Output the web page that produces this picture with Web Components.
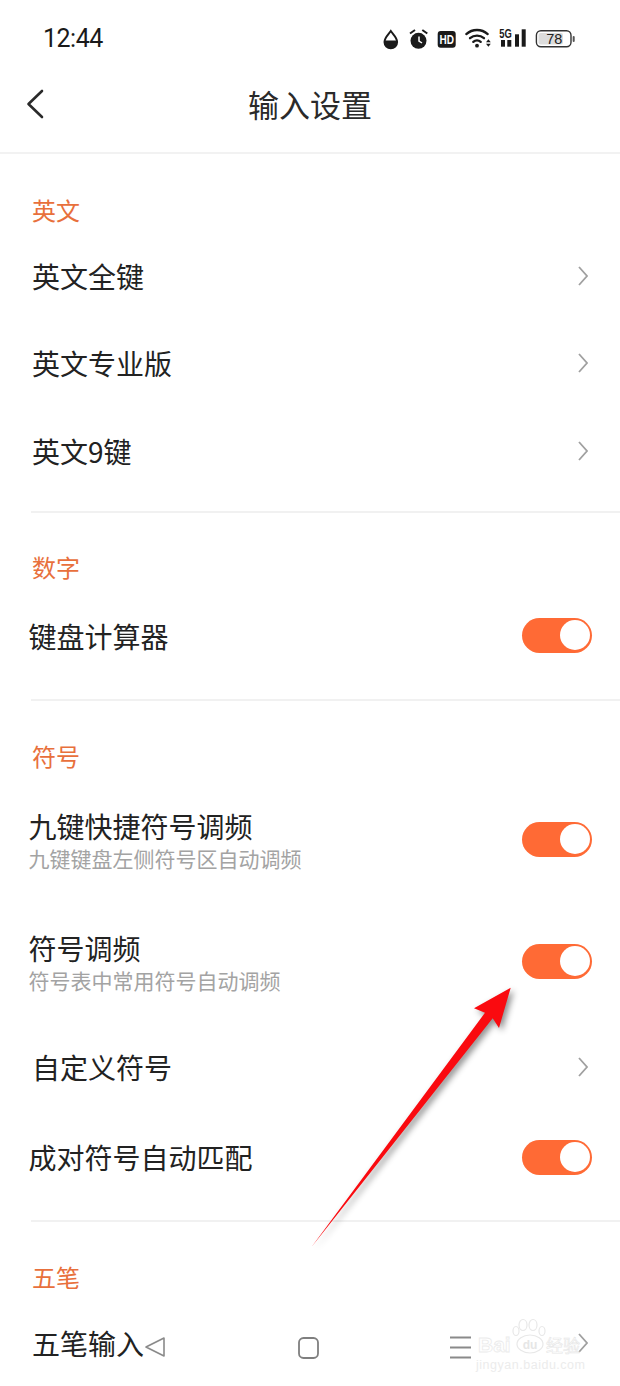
<!DOCTYPE html>
<html lang="zh">
<head>
<meta charset="utf-8">
<title>输入设置</title>
<style>
    html, body { margin: 0; background: #fff; }
    body {
        position: relative;
        width: 620px;
        height: 1386px;
        overflow: hidden;
        font-family: "Noto Sans CJK SC", "Liberation Sans", sans-serif;
        color: #222;
    }
</style>
</head>
<body>
<status-bar></status-bar>
<nav-header>输入设置</nav-header>

<settings-section label="英文" style="--top: 35px; --bottom: 16.5px">
    <setting-row chevron>英文全键</setting-row>
    <setting-row chevron>英文专业版</setting-row>
    <setting-row chevron>英文9键</setting-row>
</settings-section>

<settings-section label="数字" style="--top: 33.5px; --bottom: 20px; --gap: 3.5px">
    <setting-row toggle style="--shift: 2px">键盘计算器</setting-row>
</settings-section>

<settings-section label="符号" style="--top: 34.5px; --bottom: 17px; --gap: 1px">
    <setting-row toggle sub="九键键盘左侧符号区自动调频" style="--h: 122px">九键快捷符号调频</setting-row>
    <setting-row toggle sub="符号表中常用符号自动调频" style="--h: 122px">符号调频</setting-row>
    <setting-row chevron style="--h: 89px">自定义符号</setting-row>
    <setting-row toggle style="--h: 92px">成对符号自动匹配</setting-row>
</settings-section>

<settings-section label="五笔" style="--top: 34.5px; --bottom: 0px; --gap: 1px" class="last">
    <setting-row chevron>五笔输入</setting-row>
</settings-section>

<bottom-nav></bottom-nav>
<baidu-mark></baidu-mark>
<red-arrow></red-arrow>

<script>
class StatusBar extends HTMLElement {
    constructor() {
        super();
        this.attachShadow({ mode: 'open' });
        this.shadowRoot.innerHTML = `
            <style>
                :host {
                    display: flex;
                    align-items: center;
                    justify-content: space-between;
                    height: 58px;
                    padding: 18px 30px 0 43px;
                    box-sizing: border-box;
                    color: #1a1a1a;
                }
                .time { font: 400 25px Roboto, sans-serif; letter-spacing: -0.5px; }
                svg { display: block; flex: none; }
                text { font-family: "Liberation Sans", sans-serif; }
            </style>
            <span class="time">12:44</span>
            <svg width="220" height="45" viewBox="0 0 220 45">
                <!-- drop -->
                <path d="M20.800 15 C18 19 14.500 21.500 14.500 26 a6.300 6.300 0 0 0 12.600 0 C27.100 21.500 23.600 19 20.800 15Z" fill="none" stroke="#1a1a1a" stroke-width="2"/>
                <path d="M14.500 24.500 H27.100 V26 a6.300 6.300 0 0 1 -12.600 0Z" fill="#1a1a1a"/>
                <!-- alarm -->
                <circle cx="48.500" cy="24.800" r="8" fill="#1a1a1a"/>
                <path d="M49 20.500v4.500l3 2" fill="none" stroke="#fff" stroke-width="1.500"/>
                <path d="M40 17.500l5-3.500M57.300 17.500l-5-3.500" stroke="#1a1a1a" stroke-width="2" fill="none"/>
                <!-- HD -->
                <rect x="67.700" y="15" width="18" height="16.700" rx="3" fill="#1a1a1a"/>
                <text x="76.700" y="28" text-anchor="middle" font-size="12.500" font-weight="700" fill="#fff" textLength="14.500" lengthAdjust="spacingAndGlyphs">HD</text>
                <!-- wifi, arcs around the dot -->
                <path d="M96.300 18.100 A16 16 0 0 1 117.700 18.100 M100 22.200 A10.500 10.500 0 0 1 114 22.200 M103.300 25.900 A5.500 5.500 0 0 1 110.700 25.900" fill="none" stroke="#1a1a1a" stroke-width="2.300" stroke-linecap="round"/>
                <circle cx="107" cy="29.700" r="1.900" fill="#1a1a1a"/>
                <path d="M116 26.300h4.800l-2.400-3zM116 27.800h4.800l-2.400 3z" fill="#1a1a1a"/>
                <!-- 5G + bars -->
                <text x="129.300" y="22" font-size="12" font-weight="700" fill="#1a1a1a" textLength="12.500" lengthAdjust="spacingAndGlyphs">5G</text>
                <rect x="131" y="24" width="4" height="6.700" fill="#1a1a1a"/>
                <rect x="137.300" y="24" width="4" height="6.700" fill="#1a1a1a"/>
                <rect x="145" y="18.300" width="4" height="12.400" fill="#1a1a1a"/>
                <rect x="151.700" y="13.300" width="4" height="17.400" fill="#1a1a1a"/>
                <!-- battery -->
                <rect x="166.400" y="14.700" width="34.600" height="16" rx="4.500" fill="#fff" stroke="#333" stroke-width="1.400"/>
                <rect x="168.500" y="17" width="24.500" height="11.500" rx="2" fill="#dcdcdc"/>
                <rect x="202.700" y="20" width="2" height="6" rx="1" fill="#555"/>
                <text x="184.300" y="27.500" text-anchor="middle" font-size="14.500" fill="#222">78</text>
            </svg>
        `;
    }
}

class NavHeader extends HTMLElement {
    constructor() {
        super();
        this.attachShadow({ mode: 'open' });
        this.shadowRoot.innerHTML = `
            <style>
                :host {
                    display: flex;
                    align-items: center;
                    justify-content: center;
                    position: relative;
                    height: 96px;
                    padding-bottom: 4px;
                    box-sizing: border-box;
                    border-bottom: 2px solid #f2f2f2;
                    font-size: 31px;
                    color: #2a2a2a;
                }
                svg { position: absolute; left: 26px; top: 30px; }
            </style>
            <svg width="20" height="32" viewBox="0 0 20 32">
                <path d="M16 3 L2.500 16 L16 29" fill="none" stroke="#2a2a2a" stroke-width="2.600" stroke-linecap="round" stroke-linejoin="round"/>
            </svg>
            <slot></slot>
        `;
    }
}

class SettingsSection extends HTMLElement {
    constructor() {
        super();
        this.attachShadow({ mode: 'open' });
        this.shadowRoot.innerHTML = `
            <style>
                :host {
                    display: block;
                    padding-top: var(--top, 34px);
                }
                .label {
                    height: 42px;
                    line-height: 42px;
                    margin: 0 0 var(--gap, 1px) 32px;
                    font-size: 24px;
                    color: #e8703c;
                }
                .rule {
                    height: 1.500px;
                    margin: var(--bottom, 16px) 0 0 31px;
                    background: #f1f1f1;
                }
                :host(.last) .rule { display: none; }
            </style>
            <div class="label"></div>
            <slot></slot>
            <div class="rule"></div>
        `;
        this.shadowRoot.querySelector('.label').textContent = this.getAttribute('label');
    }
}

class SettingRow extends HTMLElement {
    constructor() {
        super();
        this.attachShadow({ mode: 'open' });
        const sub = this.getAttribute('sub');
        const hasToggle = this.hasAttribute('toggle');
        this.shadowRoot.innerHTML = `
            <style>
                :host {
                    display: flex;
                    align-items: center;
                    justify-content: space-between;
                    box-sizing: border-box;
                    height: var(--h, 87.500px);
                    padding: 0 32px;
                    font-size: 28px;
                    color: #222;
                }
                :host([toggle]) { padding-left: 28.500px; padding-right: 28px; }
                .text { display: flex; flex-direction: column; padding-top: var(--shift, 0); }
                .title { line-height: 38px; }
                .sub { font-size: 21px; line-height: 28px; margin-top: -1px; color: #a3a3a3; }
                svg { display: block; }
            </style>
            <div class="text">
                <div class="title"><slot></slot></div>
                ${sub ? `<div class="sub">${sub}</div>` : ''}
            </div>
            ${hasToggle ? '<app-toggle></app-toggle>' : `
            <svg width="10" height="20" viewBox="0 0 10 20">
                <path d="M1 1 L9 10 L1 19" fill="none" stroke="#a0a0a0" stroke-width="1.800"/>
            </svg>`}
        `;
    }
}

class AppToggle extends HTMLElement {
    constructor() {
        super();
        this.attachShadow({ mode: 'open' });
        this.shadowRoot.innerHTML = `
            <style>
                :host {
                    display: block;
                    position: relative;
                    width: 70px;
                    height: 35px;
                    border-radius: 18px;
                    background: #ff6a35;
                }
                .knob {
                    position: absolute;
                    top: 2.500px;
                    right: 2px;
                    width: 30px;
                    height: 30px;
                    border-radius: 50%;
                    background: #fff;
                }
            </style>
            <div class="knob"></div>
        `;
    }
}

class BottomNav extends HTMLElement {
    constructor() {
        super();
        this.attachShadow({ mode: 'open' });
        this.shadowRoot.innerHTML = `
            <style>
                :host { position: absolute; left: 0; top: 1330px; width: 620px; height: 36px; }
                svg { display: block; }
            </style>
            <svg width="620" height="36" viewBox="0 0 620 36">
                <path d="M146 17 L164 8 V26 Z" fill="none" stroke="#8a8a8a" stroke-width="1.600" stroke-linejoin="round"/>
                <rect x="299" y="8" width="19" height="20" rx="4.500" fill="none" stroke="#7f7f7f" stroke-width="1.800"/>
                <path d="M450 7.500 H471 M450 17.500 H471 M450 27.500 H471" stroke="#8a8a8a" stroke-width="1.800" fill="none"/>
            </svg>
        `;
    }
}

class BaiduMark extends HTMLElement {
    constructor() {
        super();
        this.attachShadow({ mode: 'open' });
        this.shadowRoot.innerHTML = `
            <style>
                :host { position: absolute; left: 474px; top: 1316px; width: 124px; height: 66px; }
                svg { display: block; }
                text { font-family: "Liberation Sans", sans-serif; }
            </style>
            <svg width="124" height="66" viewBox="0 0 124 66">
                <text x="4" y="36" font-size="21" font-weight="700" fill="#fff" stroke="#ebebeb" stroke-width=".8">Bai</text>
                <g fill="#fff" stroke="#e8e8e8" stroke-width="1.200">
                    <ellipse cx="49" cy="9" rx="4" ry="5.500"/>
                    <ellipse cx="59" cy="9" rx="4" ry="5.500"/>
                    <ellipse cx="42" cy="15" rx="3" ry="4.500"/>
                    <ellipse cx="68" cy="15" rx="3" ry="4.500"/>
                    <ellipse cx="56" cy="28" rx="13" ry="9"/>
                </g>
                <text x="56" y="33" text-anchor="middle" font-size="12" font-weight="700" fill="#e6e6e6">du</text>
                <text x="72" y="36" font-size="17" style="font-family:'Noto Sans CJK SC',sans-serif" fill="#fff" stroke="#e6e6e6" stroke-width=".6">经验</text>
                <text x="2" y="53" font-size="12.500" fill="#ececec" textLength="109">jingyan.baidu.com</text>
            </svg>
        `;
    }
}

class RedArrow extends HTMLElement {
    constructor() {
        super();
        this.attachShadow({ mode: 'open' });
        this.shadowRoot.innerHTML = `
            <style>
                :host { position: absolute; left: 0; top: 0; width: 620px; height: 1386px; pointer-events: none; }
                svg { display: block; overflow: visible; filter: drop-shadow(3px 3px 3px rgba(0,0,0,.45)); }
            </style>
            <svg width="620" height="1386" viewBox="0 0 620 1386">
                <path d="M510.700 987.700 L474 1008.300 L485 1012.700 L311.700 1246.700 L492.700 1018.300 L499 1028 Z" fill="#fa0a0f"/>
            </svg>
        `;
    }
}

customElements.define('status-bar', StatusBar);
customElements.define('nav-header', NavHeader);
customElements.define('settings-section', SettingsSection);
customElements.define('setting-row', SettingRow);
customElements.define('app-toggle', AppToggle);
customElements.define('bottom-nav', BottomNav);
customElements.define('baidu-mark', BaiduMark);
customElements.define('red-arrow', RedArrow);
</script>
</body>
</html>
